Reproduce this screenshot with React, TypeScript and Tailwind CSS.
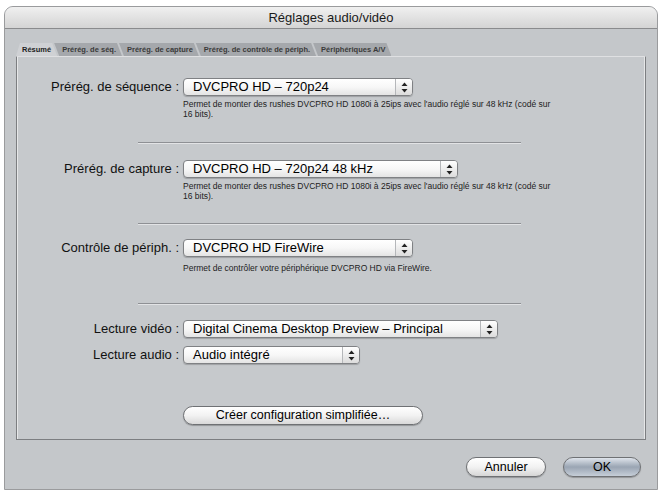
import React from "react";

// Final Cut style "Audio/Video Settings" sheet, Summary tab

const font = { fontFamily: '"Liberation Sans", Arial, sans-serif' };

function Arrows() {
  return (
    <svg width="7" height="11" viewBox="0 0 7 11">
      <path d="M3.5 0.5 L6.5 4 L0.5 4 Z" fill="#222" />
      <path d="M3.5 10.5 L6.5 7 L0.5 7 Z" fill="#222" />
    </svg>
  );
}

function Popup({ text, className }: { text: string; className: string }) {
  return (
    <div
      className={
        "flex h-[18px] items-stretch rounded-[4px] border border-[#7f8184] bg-gradient-to-b from-white via-[#f7f7f7] to-[#e4e4e4] shadow-[0_1px_1px_rgba(0,0,0,0.2)] " +
        className
      }
    >
      <div className="flex-1 pl-[9px] text-[13px] leading-[16px] text-black">{text}</div>
      <div className="flex w-[17px] items-center justify-center rounded-r-[3px] border-l border-[#b5b7ba] bg-gradient-to-b from-white to-[#dcdcdc]">
        <Arrows />
      </div>
    </div>
  );
}

function Row({ label, children }: { label: string; children: React.ReactNode }) {
  return (
    <div className="flex items-center">
      <div className="w-[166px] pr-[4px] text-right text-[13px] leading-[16px] text-[#111]">{label}</div>
      {children}
    </div>
  );
}

function Note({ children, className = "mt-[3px]" }: { children: React.ReactNode; className?: string }) {
  return <div className={"ml-[166px] text-[8.5px] leading-[10px] text-[#222] " + className}>{children}</div>;
}

function Divider() {
  return <div className="ml-[121px] w-[383px] border-t border-b border-t-[#8e9094] border-b-[#e2e3e5]" />;
}

function PillButton({ label, className }: { label: string; className: string }) {
  return (
    <div
      className={
        "flex items-center justify-center rounded-full border border-[#6f7174] text-[12.5px] text-black shadow-[0_1px_1px_rgba(0,0,0,0.25)] " +
        className
      }
    >
      {label}
    </div>
  );
}

const tabs = [
  "Prérég. de séq.",
  "Prérég. de capture",
  "Prérég. de contrôle de périph.",
  "Périphériques A/V",
];

export default function App() {
  return (
    <div className="h-[493px] w-[662px] overflow-hidden bg-white pl-[4px] pr-[4px] pt-[6px]" style={font}>
      <div className="flex h-[484px] flex-col overflow-hidden rounded-t-[9px] border border-[#9a9b9d] bg-[#c4c7ca]">
        {/* title bar */}
        <div className="flex h-[22px] items-center justify-center border-b border-[#8a8b8d] bg-gradient-to-b from-[#f0f0f0] to-[#d4d4d4] text-[13px] text-[#1a1a1a]">
          Réglages audio/vidéo
        </div>

        {/* tab strip */}
        <div className="mt-[14px] flex h-[13px] pl-[11px]">
          <div className="flex h-[13px] items-center bg-[#cfd1d4] pl-[6px] pr-[6px] text-[7.5px] font-bold text-[#222] [clip-path:polygon(4px_0,calc(100%-5px)_0,100%_100%,0_100%)]">
            Résumé
          </div>
          {tabs.map((t) => (
            <div
              key={t}
              className="-ml-[4px] flex h-[13px] items-center bg-[#a5a8ac] pl-[9px] pr-[6px] text-[7.5px] font-bold text-[#3a3a3a] [clip-path:polygon(1px_0,calc(100%-5px)_0,100%_100%,6px_100%)]"
            >
              {t}
            </div>
          ))}
        </div>

        {/* settings panel */}
        <div className="mx-[11px] flex h-[384px] flex-col border border-[#7c7e81] border-t-[#dfe0e2] bg-[#c6c9cc] shadow-[inset_1px_0_0_#e6e7e8,inset_-1px_0_0_#e6e7e8]">
          <div className="mt-[21px]">
            <Row label="Prérég. de séquence :">
              <Popup text="DVCPRO HD – 720p24" className="w-[230px]" />
            </Row>
            <Note>
              Permet de monter des rushes DVCPRO HD 1080i à 25ips avec l'audio réglé sur 48 kHz (codé sur
              <br />
              16 bits).
            </Note>
          </div>

          <div className="mt-[23px]">
            <Divider />
          </div>

          <div className="mt-[16px]">
            <Row label="Prérég. de capture :">
              <Popup text="DVCPRO HD – 720p24 48 kHz" className="w-[275px]" />
            </Row>
            <Note>
              Permet de monter des rushes DVCPRO HD 1080i à 25ips avec l'audio réglé sur 48 kHz (codé sur
              <br />
              16 bits).
            </Note>
          </div>

          <div className="mt-[22px]">
            <Divider />
          </div>

          <div className="mt-[14px]">
            <Row label="Contrôle de périph. :">
              <Popup text="DVCPRO HD FireWire" className="w-[230px]" />
            </Row>
            <Note className="mt-[6px]">Permet de contrôler votre périphérique DVCPRO HD via FireWire.</Note>
          </div>

          <div className="mt-[30px]">
            <Divider />
          </div>

          <div className="mt-[15px] flex flex-col gap-[8px]">
            <Row label="Lecture vidéo :">
              <Popup text="Digital Cinema Desktop Preview – Principal" className="w-[315px]" />
            </Row>
            <Row label="Lecture audio :">
              <Popup text="Audio intégré" className="w-[177px]" />
            </Row>
          </div>

          <div className="ml-[166px] mt-[42px]">
            <PillButton
              label="Créer configuration simplifiée…"
              className="h-[19px] w-[240px] bg-gradient-to-b from-white via-[#f2f2f2] to-[#d9d9d9]"
            />
          </div>
        </div>

        {/* sheet buttons */}
        <div className="mt-[17px] flex justify-end gap-[17px] pr-[16px]">
          <PillButton
            label="Annuler"
            className="h-[20px] w-[80px] bg-gradient-to-b from-white via-[#f2f2f2] to-[#d6d6d6]"
          />
          <PillButton
            label="OK"
            className="h-[20px] w-[78px] border-[#4f5660] bg-gradient-to-b from-[#dfe4eb] via-[#9aa5b3] to-[#c6ced8]"
          />
        </div>
      </div>
    </div>
  );
}
